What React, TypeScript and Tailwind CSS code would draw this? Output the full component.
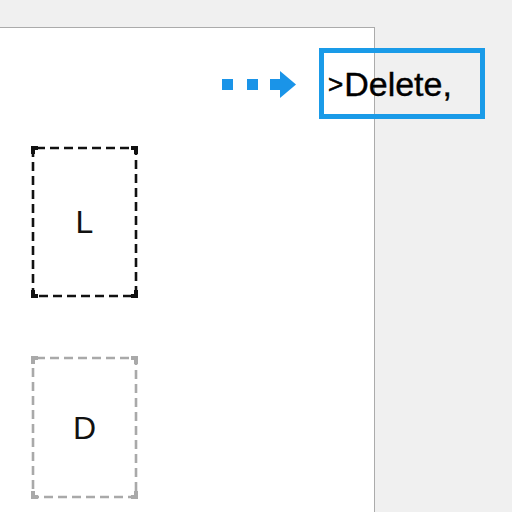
import React from "react";

function Frame({ color, letter }: { color: string; letter: string }) {
  // dashed frame with heavier corner marks, drawn over the box
  return (
    <div className="relative w-[107px] h-full flex items-center justify-center">
      <svg className="absolute inset-0" width="100%" height="100%" preserveAspectRatio="none">
        <rect
          x="2"
          y="2"
          width="calc(100% - 4px)"
          height="calc(100% - 4px)"
          fill="none"
          stroke={color}
          strokeWidth="2.6"
          strokeDasharray="9 5"
          strokeDashoffset="-3"
        />
      </svg>
      <span className="absolute left-0 top-0 w-[7px] h-[4px]" style={{ background: color }} />
      <span className="absolute left-0 top-0 w-[4px] h-[8px]" style={{ background: color }} />
      <span className="absolute right-0 top-0 w-[7px] h-[4px]" style={{ background: color }} />
      <span className="absolute right-0 top-0 w-[4px] h-[8px]" style={{ background: color }} />
      <span className="absolute left-0 bottom-0 w-[7px] h-[4px]" style={{ background: color }} />
      <span className="absolute left-0 bottom-0 w-[4px] h-[8px]" style={{ background: color }} />
      <span className="absolute right-0 bottom-0 w-[7px] h-[4px]" style={{ background: color }} />
      <span className="absolute right-0 bottom-0 w-[4px] h-[8px]" style={{ background: color }} />
      <span className="text-[32px] leading-none text-[#111] font-['Liberation_Sans',Arial,sans-serif]">
        {letter}
      </span>
    </div>
  );
}

export default function App() {
  return (
    <div className="relative w-[512px] h-[512px] overflow-hidden bg-[#f0f0f0] font-['Liberation_Sans',Arial,sans-serif]">
      <div className="mt-[27px] w-[375px] h-[485px] bg-white border-t border-r border-[#ababab] pl-[31px] pt-[118px] flex flex-col gap-[58px]">
        <div className="h-[152px]">
          <Frame color="#111" letter="L" />
        </div>
        <div className="h-[143px]">
          <Frame color="#a9a9a9" letter="D" />
        </div>
      </div>

      {/* callout arrow + highlighted label */}
      <div className="absolute left-[222px] top-[48px] flex items-center">
        <svg width="74" height="28" viewBox="0 0 74 28" className="mr-[23px]">
          <rect x="0" y="9" width="11" height="11" fill="#1a94e8" />
          <rect x="25" y="9" width="11" height="11" fill="#1a94e8" />
          <rect x="48" y="9" width="12" height="11" fill="#1a94e8" />
          <polygon points="58,1 74,14.5 58,28" fill="#1a94e8" />
        </svg>
        <div className="w-[166px] h-[71px] border-[5px] border-[#1a9be8] flex items-center pl-[4px]">
          <span className="text-[26px] leading-none text-black mr-[1px] relative top-[0px] [-webkit-text-stroke:0.6px_black]">&gt;</span>
          <span className="text-[34px] leading-none text-black [-webkit-text-stroke:0.4px_black]">Delete,</span>
        </div>
      </div>
    </div>
  );
}
